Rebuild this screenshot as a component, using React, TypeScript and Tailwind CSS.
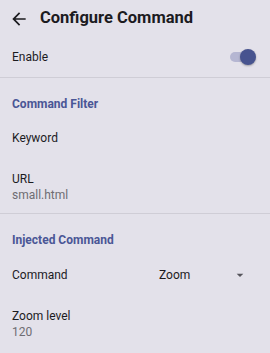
const ArrowBack = () => (
  <svg width="20" height="20" viewBox="0 0 24 24" fill="#1c1b1f">
    <path d="M20 11H7.83l5.59-5.59L12 4l-8 8 8 8 1.41-1.41L7.83 13H20v-2z" />
  </svg>
);

const DropDown = () => (
  <svg width="16" height="16" viewBox="0 0 24 24" fill="#56555c">
    <path d="M7 10l5 5 5-5z" />
  </svg>
);

const Toggle = () => (
  <div className="relative w-[26px] h-[16px] flex items-center">
    <div className="w-[24px] h-[10px] rounded-full bg-[#b5b6d2]" />
    <div className="absolute right-0 top-0 w-[16px] h-[16px] rounded-full bg-[#47538f] shadow-[0_1px_2px_rgba(0,0,0,0.3)]" />
  </div>
);

export default function App() {
  return (
    <div
      className="w-[270px] h-[353px] bg-[#e3e1ea] text-[#1c1b1f] overflow-hidden"
      style={{ fontFamily: 'Roboto, "Liberation Sans", sans-serif' }}
    >
      {/* Header */}
      <div className="h-[37px] flex items-center pl-[9px] gap-[11px]">
        <ArrowBack />
        <h1 className="text-[16.5px] font-bold leading-none">Configure Command</h1>
      </div>

      {/* Enable */}
      <div className="h-[40px] flex items-center justify-between pl-[12px] pr-[14px] text-[12px]">
        <span>Enable</span>
        <Toggle />
      </div>
      <div className="h-px bg-[#cfcdd6]" />

      {/* Command Filter */}
      <div className="pt-[9px] px-[12px] text-[12px]">
        <div className="h-[34px] flex items-center font-bold text-[#4a5696]">Command Filter</div>
        <div className="h-[34px] flex items-center">Keyword</div>
        <div className="pt-[16px] pb-[10px] leading-[16px]">
          <div>URL</div>
          <div className="text-[#6e6d73]">small.html</div>
        </div>
      </div>
      <div className="h-px bg-[#cfcdd6]" />

      {/* Injected Command */}
      <div className="pt-[9px] px-[12px] text-[12px]">
        <div className="h-[34px] flex items-center font-bold text-[#4a5696]">Injected Command</div>
        <div className="h-[36px] flex items-center">
          <span className="w-[147px]">Command</span>
          <span className="flex-1">Zoom</span>
          <span className="mr-[10px]">
            <DropDown />
          </span>
        </div>
        <div className="pt-[15px] leading-[16px]">
          <div>Zoom level</div>
          <div className="text-[#6e6d73]">120</div>
        </div>
      </div>
    </div>
  );
}
